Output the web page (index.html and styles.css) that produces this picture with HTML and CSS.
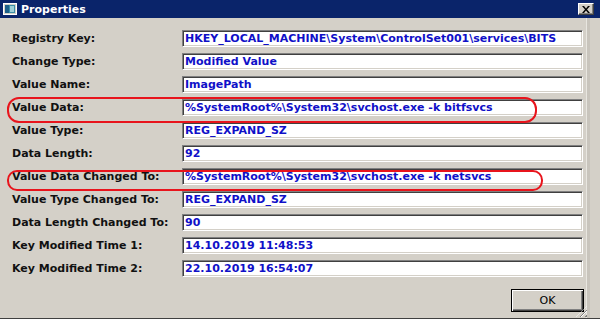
FILE: index.html
```html
<!DOCTYPE html>
<html lang="en">
  <head>
    <meta charset="UTF-8" />
    <title>Properties</title>
    <link rel="stylesheet" href="styles.css">
  </head>
  <body>
    <div class="window">
      <header class="titlebar">
        <svg class="app-icon" width="14" height="12" viewBox="0 0 14 12">
          <rect x="0.5" y="0.5" width="13" height="11" fill="#d4d0c8" stroke="#fff" />
          <rect x="2" y="2" width="10" height="8" fill="#3a8fa8" />
          <rect x="2" y="2" width="4" height="8" fill="#1c5f8a" />
          <rect x="7" y="3" width="4" height="6" fill="#9fd0d8" />
        </svg>
        <span class="title">Properties</span>
        <button class="close">
          <svg width="8" height="7" viewBox="0 0 8 7">
            <path d="M0 0h2l2 2.5L6 0h2L5 3.5 8 7H6L4 4.5 2 7H0l3-3.5z" fill="#000" />
          </svg>
        </button>
      </header>
      <main class="content">
        <div class="form">
          <div class="row"><span class="label">Registry Key:</span><span class="field">HKEY_LOCAL_MACHINE\System\ControlSet001\services\BITS</span></div>
          <div class="row"><span class="label">Change Type:</span><span class="field">Modified Value</span></div>
          <div class="row"><span class="label">Value Name:</span><span class="field">ImagePath</span></div>
          <div class="row"><span class="label">Value Data:</span><span class="field">%SystemRoot%\System32\svchost.exe -k bitfsvcs</span></div>
          <div class="row"><span class="label">Value Type:</span><span class="field">REG_EXPAND_SZ</span></div>
          <div class="row"><span class="label">Data Length:</span><span class="field">92</span></div>
          <div class="row"><span class="label">Value Data Changed To:</span><span class="field">%SystemRoot%\System32\svchost.exe -k netsvcs</span></div>
          <div class="row"><span class="label">Value Type Changed To:</span><span class="field">REG_EXPAND_SZ</span></div>
          <div class="row"><span class="label">Data Length Changed To:</span><span class="field">90</span></div>
          <div class="row"><span class="label">Key Modified Time 1:</span><span class="field">14.10.2019 11:48:53</span></div>
          <div class="row"><span class="label">Key Modified Time 2:</span><span class="field">22.10.2019 16:54:07</span></div>
          <div class="mark mark-1"></div>
          <div class="mark mark-2"></div>
        </div>
        <footer class="buttons">
          <button class="ok">OK</button>
        </footer>
        <div class="grip"></div>
      </main>
    </div>
  </body>
</html>
```

FILE: styles.css
```css
body {
  margin: 0;
  background-color: #fff;
  font-family: "DejaVu Sans", Tahoma, sans-serif;
  font-size: 11px;
}

.window {
  width: 600px;
  height: 319px;
  display: flex;
  flex-direction: column;
  background-color: #d4d0c8;
  border-bottom: 1px solid #404040;
  box-sizing: border-box;
}

.titlebar {
  height: 18px;
  flex: none;
  display: flex;
  align-items: center;
  background-color: #0a246a;
  padding-left: 3px;
  padding-right: 6px;
}

.app-icon {
  margin-right: 4px;
}

.title {
  color: #fff;
  font-weight: bold;
  flex: 1;
}

.close {
  width: 16px;
  height: 12px;
  padding: 0;
  margin: 0;
  display: flex;
  align-items: center;
  justify-content: center;
  background-color: #d4d0c8;
  border: 1px solid;
  border-color: #fff #404040 #404040 #fff;
  box-shadow: inset -1px -1px 0 #808080;
}

.content {
  flex: 1;
  display: flex;
  flex-direction: column;
  padding: 12px 0 0 12px;
  position: relative;
  border-right: 3px solid #c8c4bc;
  box-shadow: inset -1px 0 0 #e8e6e0;
  margin-right: 10px;
}

.form {
  position: relative;
  display: flex;
  flex-direction: column;
  gap: 6px;
}

.row {
  display: flex;
  align-items: center;
}

.label {
  width: 170px;
  flex: none;
  font-weight: bold;
  color: #111;
}

.field {
  width: 401px;
  height: 17px;
  box-sizing: border-box;
  background-color: #fff;
  border: 1px solid;
  border-color: #808080 #fff #fff #808080;
  box-shadow: inset 1px 1px 0 #404040, inset -1px -1px 0 #d4d0c8;
  padding: 1px 0 0 2px;
  color: #1010c8;
  font-weight: bold;
  line-height: 14px;
  white-space: nowrap;
  overflow: hidden;
}

.mark {
  position: absolute;
  left: -5px;
  border: 2px solid #e8141c;
  border-radius: 12px;
  box-sizing: border-box;
}

.mark-1 {
  top: 67px;
  width: 530px;
  height: 26px;
}

.mark-2 {
  top: 140px;
  width: 536px;
  height: 21px;
  border-radius: 10px;
}

.buttons {
  display: flex;
  justify-content: flex-end;
  margin-top: 12px;
  padding-right: 3px;
}

.ok {
  width: 73px;
  height: 23px;
  background-color: #d4d0c8;
  border: 1px solid #000;
  box-shadow: inset 1px 1px 0 #fff, inset -1px -1px 0 #404040, inset -2px -2px 0 #808080;
  font-family: "DejaVu Sans", Tahoma, sans-serif;
  font-size: 11px;
  color: #000;
  padding: 0;
}

.grip {
  position: absolute;
  right: 0;
  bottom: 1px;
  width: 11px;
  height: 11px;
  background: repeating-linear-gradient(135deg, transparent 0 2px, #808080 2px 3px, #fff 3px 4px);
  clip-path: polygon(100% 0, 100% 100%, 0 100%);
}
```
